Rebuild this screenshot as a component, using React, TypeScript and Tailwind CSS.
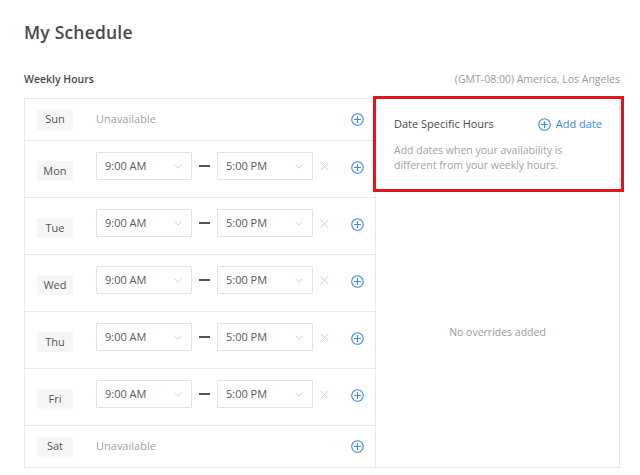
import React from "react";

const font = { fontFamily: '"Open Sans", "Liberation Sans", sans-serif' };

const PlusCircle: React.FC<{ size?: number }> = ({ size = 13 }) => (
  <svg width={size} height={size} viewBox="0 0 14 14" fill="none" stroke="#3b8ae0" strokeWidth="1.2">
    <circle cx="7" cy="7" r="6.2" />
    <path d="M7 3.8v6.4M3.8 7h6.4" strokeLinecap="round" />
  </svg>
);

const Chevron = () => (
  <svg width="8" height="5" viewBox="0 0 8 5" fill="none" stroke="#cfcfcf" strokeWidth="0.9">
    <path d="M0.5 0.5L4 4.2L7.5 0.5" />
  </svg>
);

const Cross = () => (
  <svg width="9" height="9" viewBox="0 0 9 9" fill="none" stroke="#cfcfcf" strokeWidth="1">
    <path d="M0.5 0.5L8.5 8.5M8.5 0.5L0.5 8.5" />
  </svg>
);

const TimeSelect: React.FC<{ value: string }> = ({ value }) => (
  <div className="w-[96px] h-[28px] border border-[#e3e3e3] rounded-[1px] flex items-center justify-between pl-[8px] pr-[9px] text-[11px] text-[#5a5a5a]">
    <span>{value}</span>
    <Chevron />
  </div>
);

const DayLabel: React.FC<{ day: string }> = ({ day }) => (
  <div className="w-[36px] h-[20px] bg-[#f6f6f6] flex items-center justify-center text-[11px] text-[#555]">{day}</div>
);

const days = [
  { day: "Sun", on: false },
  { day: "Mon", on: true },
  { day: "Tue", on: true },
  { day: "Wed", on: true },
  { day: "Thu", on: true },
  { day: "Fri", on: true },
  { day: "Sat", on: false },
];

export default function App() {
  return (
    <div className="w-[640px] h-[475px] bg-white overflow-hidden" style={font}>
      <div className="pl-6 pr-[20px] pt-[20px]">
        <h1 className="text-[17.5px] font-semibold text-[#4a4a4a] leading-[24px] tracking-[0.2px]">My Schedule</h1>
        <div className="flex items-center justify-between mt-[28px] h-[16px]">
          <span className="text-[10.5px] font-semibold text-[#4a4a4a]">Weekly Hours</span>
          <span className="text-[10.5px] text-[#9b9b9b]">(GMT-08:00) America, Los Angeles</span>
        </div>
        <div className="mt-[10px] w-[596px] flex border-t border-[#e8e9ee]">
          <div className="w-[352px] border-l border-r border-[#e8e9ee]">
            {days.map((d) =>
              d.on ? (
                <div key={d.day} className="h-[57px] border-b border-[#e8e9ee] flex items-start pl-[12px] pr-[11px] pt-[11px]">
                  <div className="mt-[9px]">
                    <DayLabel day={d.day} />
                  </div>
                  <div className="ml-[23px] flex flex-1 items-center">
                    <TimeSelect value="9:00 AM" />
                    <div className="w-[11px] h-[1.5px] bg-[#555] mx-[7px]" />
                    <TimeSelect value="5:00 PM" />
                    <div className="ml-[7px]">
                      <Cross />
                    </div>
                    <div className="ml-auto mt-[2px]">
                      <PlusCircle />
                    </div>
                  </div>
                </div>
              ) : (
                <div key={d.day} className="h-[42px] border-b border-[#e8e9ee] flex items-center pl-[12px] pr-[11px]">
                  <DayLabel day={d.day} />
                  <span className="ml-[23px] text-[11px] text-[#a3a3a3]">Unavailable</span>
                  <div className="ml-auto">
                    <PlusCircle />
                  </div>
                </div>
              )
            )}
          </div>
          <div className="relative w-[244px] border-r border-b border-[#e8e9ee] h-[369px]">
            <div className="pl-[18px] pr-[17px] pt-[17px]">
              <div className="flex items-center justify-between">
                <span className="text-[11px] text-[#4a4a4a]">Date Specific Hours</span>
                <span className="flex items-center gap-[5px] text-[11px] text-[#3b8ae0]">
                  <PlusCircle size={13} />
                  Add date
                </span>
              </div>
              <p className="mt-[10px] text-[10.5px] leading-[15px] text-[#a3a3a3]">
                Add dates when your availability is
                <br />
                different from your weekly hours.
              </p>
            </div>
            <div className="mt-[152px] text-center text-[10.5px] text-[#9b9b9b]">No overrides added</div>
            <div className="absolute left-[-3px] top-[-3px] w-[251px] h-[96px] border-[3px] border-[#e3141f] pointer-events-none" />
          </div>
        </div>
      </div>
    </div>
  );
}
